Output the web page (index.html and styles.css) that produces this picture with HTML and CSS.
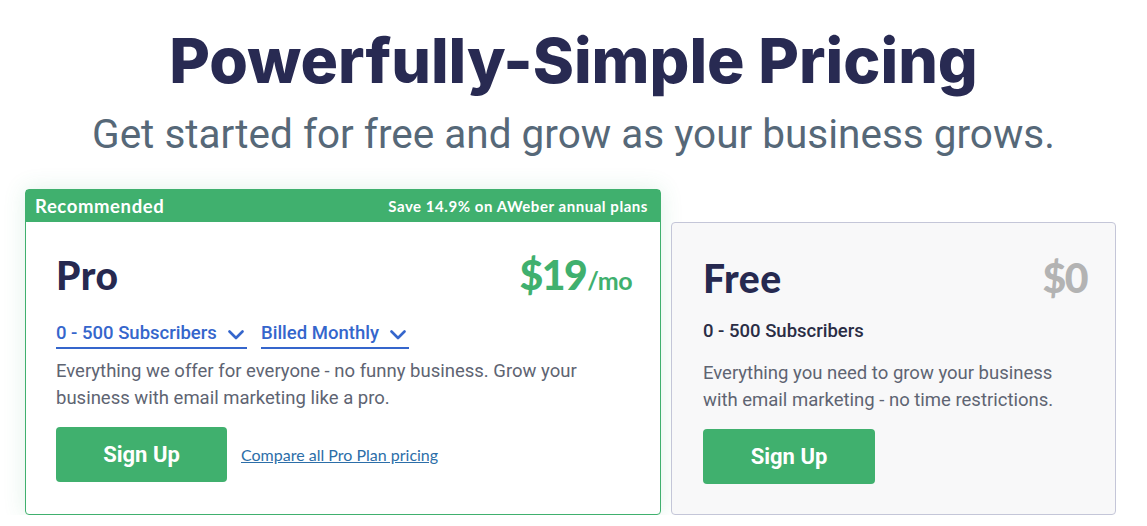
FILE: index.html
```html
<!DOCTYPE html>
<html>
<head>
<meta charset="utf-8">
<link rel="stylesheet" href="styles.css">
</head>
<body>
<div class="page">
  <h1 class="title">Powerfully-Simple Pricing</h1>
  <p class="subtitle">Get started for free and grow as your business grows.</p>
  <div class="plans">
    <div class="card card-pro">
      <div class="card-head">
        <span class="rec">Recommended</span>
        <span class="save">Save 14.9% on AWeber annual plans</span>
      </div>
      <div class="card-body">
        <div class="name-row">
          <span class="plan-name">Pro</span>
          <span class="price price-green">$19<span class="per">/mo</span></span>
        </div>
        <div class="selects">
          <div class="select sel-subs">0 - 500 Subscribers
            <svg class="chev" viewBox="0 0 16 10" width="16" height="10"><path d="M1.5 1.5 L8 8 L14.5 1.5" fill="none" stroke="#3566cc" stroke-width="2.6" stroke-linecap="round" stroke-linejoin="round"/></svg>
          </div>
          <div class="select sel-bill">Billed Monthly
            <svg class="chev" viewBox="0 0 16 10" width="16" height="10"><path d="M1.5 1.5 L8 8 L14.5 1.5" fill="none" stroke="#3566cc" stroke-width="2.6" stroke-linecap="round" stroke-linejoin="round"/></svg>
          </div>
        </div>
        <p class="desc">Everything we offer for everyone - no funny business. Grow your business with email marketing like a pro.</p>
        <div class="actions">
          <a class="btn">Sign Up</a>
          <a class="compare">Compare all Pro Plan pricing</a>
        </div>
      </div>
    </div>
    <div class="card card-free">
      <div class="card-body">
        <div class="name-row">
          <span class="plan-name">Free</span>
          <span class="price price-grey">$0</span>
        </div>
        <div class="subs">0 - 500 Subscribers</div>
        <p class="desc">Everything you need to grow your business with email marketing - no time restrictions.</p>
        <div class="actions">
          <a class="btn">Sign Up</a>
        </div>
      </div>
    </div>
  </div>
</div>
</body>
</html>
```

FILE: styles.css
```css
* { box-sizing: border-box; }
html, body { margin: 0; padding: 0; background: #ffffff; }
.page {
  width: 1147px;
  padding-top: 22px;
  font-family: Roboto, "Liberation Sans", sans-serif;
}
.title {
  margin: 0;
  text-align: center;
  font-family: Inter, "Liberation Sans", sans-serif;
  font-weight: 800;
  font-size: 62.5px;
  line-height: 76px;
  color: #282a52;
}
.subtitle {
  margin: 0;
  margin-top: 12px;
  text-align: center;
  font-size: 40.5px;
  line-height: 48px;
  font-weight: 400;
  color: #566878;
}
.plans {
  display: flex;
  align-items: flex-end;
  gap: 10px;
  padding-left: 25px;
  margin-top: 31px;
}
.card { border-radius: 4px; }
.card-pro {
  width: 636px;
  border: 1px solid #40b06e;
  background: #fff;
  box-shadow: 0 0 22px rgba(64, 176, 110, 0.16);
}
.card-head {
  height: 32px;
  background: #40b06e;
  display: flex;
  justify-content: space-between;
  align-items: center;
  padding: 0 12px 0 9px;
  color: #fff;
  font-family: "Source Sans Pro", Lato, "Open Sans", sans-serif;
  font-weight: 700;
}
.rec { font-size: 18.5px; letter-spacing: 0.6px; }
.save { font-size: 15px; letter-spacing: 0.55px; }
.card-body {
  padding: 33px 28px 32px 30px;
}
.card-free {
  width: 445px;
  height: 293px;
  border: 1px solid #c4c6d8;
  background: #f8f8f9;
}
.card-free .card-body { padding: 35px 28px 30px 31px; }
.name-row {
  display: flex;
  justify-content: space-between;
  align-items: baseline;
  height: 40px;
}
.plan-name {
  font-family: Lato, sans-serif;
  font-weight: 900;
  font-size: 39px;
  line-height: 40px;
  color: #262950;
  letter-spacing: 0.5px;
}
.price {
  font-family: Lato, sans-serif;
  font-weight: 900;
  font-size: 41px;
  line-height: 40px;
  letter-spacing: -1.5px;
}
.price-green { color: #40b06e; }
.price-grey { color: #b3b3b3; }
.per { font-size: 25px; font-weight: 700; letter-spacing: -0.5px; margin-left: 1px; }
.selects {
  display: flex;
  gap: 14px;
  margin-top: 26px;
}
.select {
  display: flex;
  align-items: center;
  justify-content: space-between;
  font-size: 18.5px;
  font-weight: 500;
  color: #3566cc;
  border-bottom: 2px solid #3566cc;
  height: 28px;
  padding-bottom: 3px;
}
.sel-subs { width: 191px; }
.sel-bill { width: 148px; }
.chev { margin-top: 4px; margin-right: 3px; }
.subs {
  margin-top: 22px;
  height: 31px;
  font-size: 18.5px;
  font-weight: 500;
  color: #2a2d45;
}
.desc {
  margin: 9px 0 0 0;
  font-size: 18.5px;
  line-height: 27px;
  color: #5e6472;
  max-width: 540px;
}
.card-free .desc { max-width: 370px; }
.actions {
  display: flex;
  align-items: center;
  margin-top: 15px;
  gap: 14px;
}
.btn {
  display: flex;
  align-items: center;
  justify-content: center;
  width: 171px;
  height: 55px;
  background: #40b06e;
  color: #fff;
  border-radius: 4px;
  font-size: 22px;
  font-weight: 700;
}
.card-free .btn { width: 172px; }
.compare {
  font-family: "Source Sans Pro", Lato, sans-serif;
  font-size: 16px;
  color: #2c6ea8;
  text-decoration: underline;
  margin-top: 0;
}
```
